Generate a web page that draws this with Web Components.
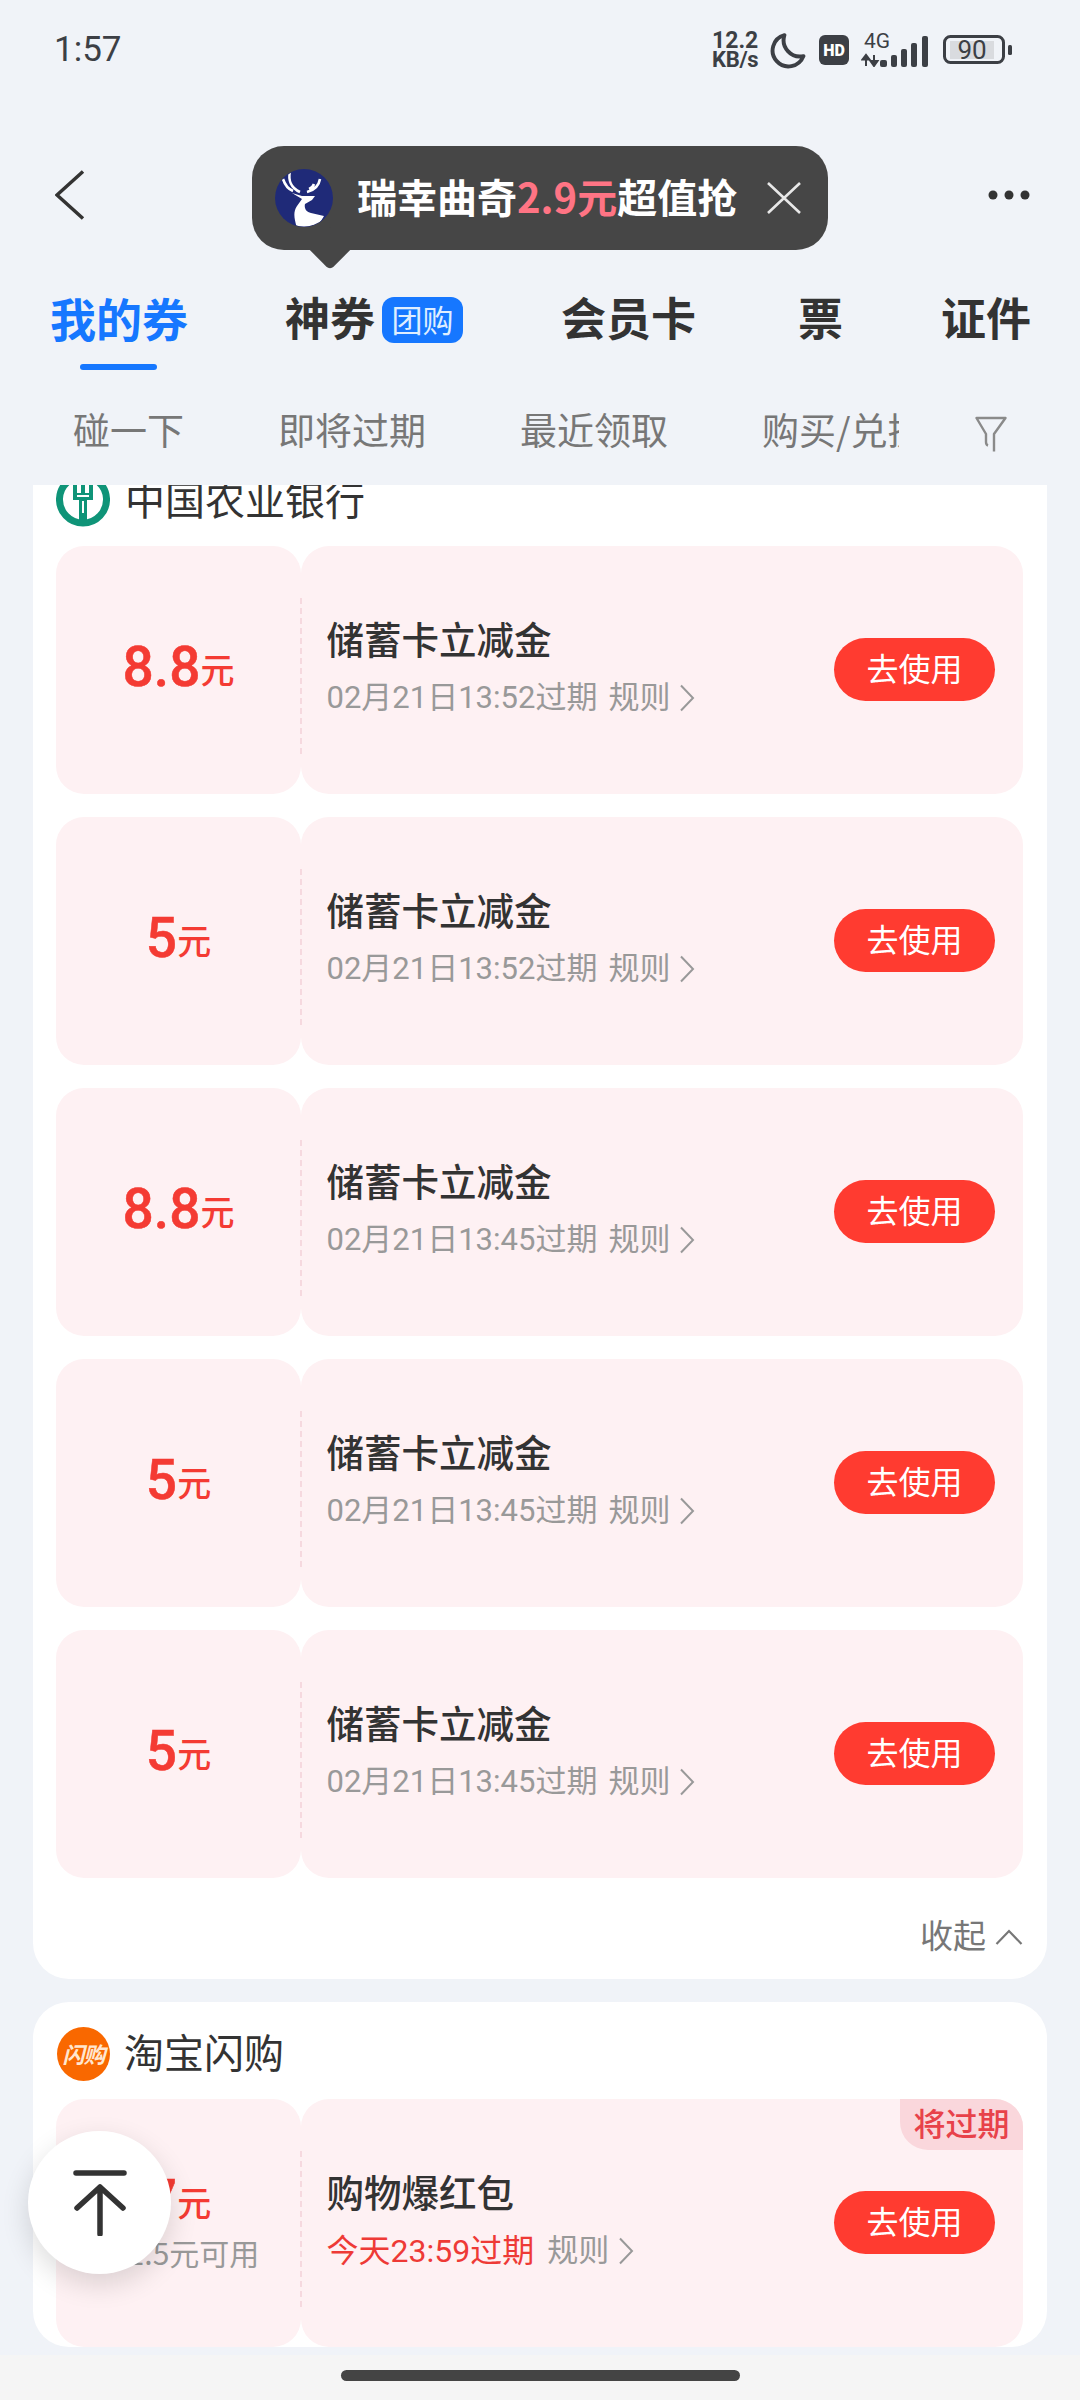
<!DOCTYPE html>
<html lang="zh">
<head>
<meta charset="utf-8">
<title>我的券</title>
<style>
  html,body{margin:0;padding:0;background:#f0f3f8;}
  body{
    width:1080px;
    height:2400px;
    overflow:hidden;
    position:relative;
    font-family:"Noto Sans CJK SC","Noto Sans",sans-serif;
    color:#333;
  }
</style>
</head>
<body>
<status-bar></status-bar>
<nav-bar></nav-bar>
<tab-strip></tab-strip>
<filter-strip></filter-strip>
<coupon-list>
  <coupon-group name="中国农业银行" logo="abc" foot>
    <coupon-card amount="8.8" title="储蓄卡立减金" expire="02月21日13:52过期"></coupon-card>
    <coupon-card amount="5" title="储蓄卡立减金" expire="02月21日13:52过期"></coupon-card>
    <coupon-card amount="8.8" title="储蓄卡立减金" expire="02月21日13:45过期"></coupon-card>
    <coupon-card amount="5" title="储蓄卡立减金" expire="02月21日13:45过期"></coupon-card>
    <coupon-card amount="5" title="储蓄卡立减金" expire="02月21日13:45过期"></coupon-card>
  </coupon-group>
  <coupon-group name="淘宝闪购" logo="flash">
    <coupon-card amount="7" limit="满1.5元可用" title="购物爆红包" expire="今天23:59过期" urgent></coupon-card>
  </coupon-group>
</coupon-list>
<home-bar></home-bar>
<to-top></to-top>

<script>
const sans='"Noto Sans CJK SC","Noto Sans",sans-serif';

class StatusBar extends HTMLElement{
  constructor(){
    super();
    this.attachShadow({mode:'open'}).innerHTML=`
      <style>
        :host{display:flex;height:100px;align-items:center;padding:0 67px 0 54px;box-sizing:border-box;color:#3c3f45;font-family:Roboto,sans-serif;}
        .time{font-size:35px;flex:1;margin-top:-1px;}
        .speed{width:49px;font-weight:700;line-height:19px;margin-right:8px;margin-top:-1px;}
        .speed span{display:block;}
        .speed .v{font-size:23px;}
        .speed .u{font-size:22px;letter-spacing:-.3px;}
        svg{display:block;flex:none;}
        .net{width:68px;height:34px;position:relative;margin:0 14px 0 12px;}
        .net b{position:absolute;left:3px;top:-3px;font-size:21px;font-weight:400;line-height:22px;}
        .batt{position:relative;width:70px;height:30px;}
        .batt b{position:absolute;left:7px;top:5px;width:44px;height:19px;font-size:26px;font-weight:400;line-height:20px;text-align:center;}
      </style>
      <div class="time">1:57</div>
      <div class="speed"><span class="v">12.2</span><span class="u">KB/s</span></div>
      <svg width="37" height="37" viewBox="0 0 36 36"><path d="M15 3A15.500 15.500 0 1 0 33.500 23.500 A16 16 0 0 1 15 3Z" fill="none" stroke="#3c3f45" stroke-width="3.800" stroke-linejoin="round"/></svg>
      <svg width="30" height="30" viewBox="0 0 30 30" style="margin-left:13px"><rect width="30" height="30" rx="6" fill="#3c3f45"/><text x="15" y="21" font-family="Roboto,sans-serif" font-size="16" font-weight="900" text-anchor="middle" fill="#fff">HD</text></svg>
      <div class="net">
        <b>4G</b>
        <svg width="68" height="34" viewBox="0 0 68 34" style="position:absolute;left:0;top:0">
          <path d="M5 22v11M1.500 26.500H8.500L5 22ZM13 33V22M9.500 28h7L13 33Z" fill="#3c3f45" stroke="#3c3f45" stroke-width="2"/>
          <rect x="19" y="27" width="7" height="7" rx="2" fill="#3c3f45"/>
          <rect x="30" y="22" width="6" height="12" rx="2" fill="#3c3f45"/>
          <rect x="40" y="16" width="6" height="18" rx="2" fill="#3c3f45"/>
          <rect x="50" y="10" width="6" height="24" rx="2" fill="#3c3f45"/>
          <rect x="61" y="3" width="6" height="31" rx="2" fill="#3c3f45"/>
        </svg>
      </div>
      <div class="batt">
        <svg width="70" height="30" viewBox="0 0 70 30">
          <rect x="1.500" y="1.500" width="59" height="26" rx="6" fill="none" stroke="#3c3f45" stroke-width="3"/>
          <rect x="7" y="6" width="44" height="18" fill="#d9dbdf"/>
          <rect x="65" y="10" width="4" height="10" rx="1.500" fill="#3c3f45"/>
        </svg>
        <b>90</b>
      </div>
    `;
  }
}

class NavBar extends HTMLElement{
  constructor(){
    super();
    this.attachShadow({mode:'open'}).innerHTML=`
      <style>
        :host{display:flex;position:relative;height:190px;align-items:center;justify-content:space-between;padding:0 48px 0 55px;box-sizing:border-box;}
        svg{display:block;flex:none;}
        .tip{
          position:absolute;left:252px;top:46px;width:576px;height:104px;
          background:#464646;border-radius:32px;
          display:flex;align-items:center;box-sizing:border-box;padding-left:23px;
          font-family:${sans};font-weight:700;font-size:40px;color:#fff;white-space:nowrap;
        }
        .tip::after{
          content:'';position:absolute;left:63px;bottom:-14px;width:30px;height:30px;
          background:#464646;transform:rotate(45deg);border-radius:0 0 5px 0;
        }
        .tip .txt{margin:-5px 0 0 24px;line-height:50px;}
        .tip em{font-style:normal;color:#ff7484;}
        .tip .close{margin-left:29px;}
      </style>
      <svg width="30" height="50" viewBox="0 0 30 50"><path d="M28 1.500 2 25l26 23.500" fill="none" stroke="#333" stroke-width="3.500"/></svg>
      <svg width="44" height="10" viewBox="0 0 44 10"><circle cx="5" cy="5" r="4.500" fill="#333"/><circle cx="21" cy="5" r="4.500" fill="#333"/><circle cx="37" cy="5" r="4.500" fill="#333"/></svg>
      <div class="tip">
        <svg width="58" height="60" viewBox="0 0 58 60">
          <circle cx="29" cy="30" r="29" fill="#1f2a78"/>
          <clipPath id="disc"><circle cx="29" cy="30" r="28.500"/></clipPath>
          <g clip-path="url(#disc)">
            <path d="M15 3c-2 9 1 17 10 21M8 11c2 6 5 10 10 12M45 11c-1 6-5 11-13 13M39 16c-1 3-2 4-5 5" fill="none" stroke="#fff" stroke-width="2.600"/>
            <path d="M17 25 27 28H40L37 32 30 36C29 40 31 44 36 45L49 48 46 53 38 60H22C19 50 18 44 22 38L27 31Z" fill="#fff"/>
          </g>
        </svg>
        <div class="txt">瑞幸曲奇<em>2.9元</em>超值抢</div>
        <svg class="close" width="36" height="32" viewBox="0 0 36 32"><path d="M2 1l32 30M34 1 2 31" fill="none" stroke="#e8e8e8" stroke-width="2.600"/></svg>
      </div>
    `;
  }
}

class TabStrip extends HTMLElement{
  constructor(){
    super();
    this.attachShadow({mode:'open'}).innerHTML=`
      <style>
        :host{display:flex;height:90px;gap:98px;padding-left:50px;box-sizing:border-box;font-weight:700;font-size:45px;color:#333;white-space:nowrap;line-height:54px;}
        .on{position:relative;font-size:46px;margin-right:-1px;color:#1677ff;}
        .on::after{content:'';position:absolute;left:30px;top:74px;width:77px;height:6px;border-radius:3px;background:#1677ff;}
        .tab{display:flex;align-items:flex-start;}
        .tag{
          margin:7px 0 0 7px;width:81px;height:46px;border-radius:12px;background:#1677ff;
          color:#dfeeff;font-size:31px;font-weight:400;line-height:44px;text-align:center;
        }
        .single{margin-left:4px;}
      </style>
      <div class="on">我的券</div>
      <div class="tab">神券<span class="tag">团购</span></div>
      <div>会员卡</div>
      <div class="single">票</div>
      <div>证件</div>
    `;
  }
}

class FilterStrip extends HTMLElement{
  constructor(){
    super();
    this.attachShadow({mode:'open'}).innerHTML=`
      <style>
        :host{display:flex;height:105px;align-items:center;box-sizing:border-box;padding:0 73px 0 73px;color:#777;font-size:37px;white-space:nowrap;}
        .scroll{width:827px;overflow:hidden;display:flex;gap:94px;line-height:48px;margin-top:-7px;}
        svg{display:block;margin-left:76px;flex:none;margin-top:3px;}
      </style>
      <div class="scroll"><span>碰一下</span><span>即将过期</span><span>最近领取</span><span>购买/兑换</span></div>
      <svg width="32" height="36" viewBox="0 0 32 36"><path d="M13 29.500c-1.500-.5-2-1.500-2-3.500V18L1.500 2h29L19 18V35.500" fill="none" stroke="#8a8a8a" stroke-width="2.400" stroke-linejoin="round"/></svg>
    `;
  }
}

class CouponList extends HTMLElement{
  constructor(){
    super();
    this.attachShadow({mode:'open'}).innerHTML=`
      <style>
        :host{display:block;height:1870px;overflow:hidden;padding:0 33px;box-sizing:border-box;}
        .inner{display:flex;flex-direction:column;gap:23px;margin-top:-36px;}
      </style>
      <div class="inner"><slot></slot></div>
    `;
  }
}

const groupLogos={
  abc:`<svg width="54" height="54" viewBox="0 0 54 54">
    <path d="M12 7.500A23.500 23.500 0 1 0 42 7.500" fill="none" stroke="#0f9478" stroke-width="7"/>
    <path d="M17 0h20v26h-6v24h-8V26h-6Z" fill="#0f9478"/>
    <path d="M21 11h4v8h-4ZM29 11h4v8h-4ZM21 21h12v2H21ZM26 27h2v12h-2Z" fill="#fff"/>
  </svg>`,
  flash:`<div class="flash">闪购</div>`
};

class CouponGroup extends HTMLElement{
  constructor(){
    super();
    this.attachShadow({mode:'open'});
  }
  connectedCallback(){
    const foot=this.hasAttribute('foot')?`
      <div class="foot"><span>收起</span><svg width="28" height="16" viewBox="0 0 28 16"><path d="M1.500 15 14 2l12.500 13" fill="none" stroke="#777" stroke-width="2.200"/></svg></div>`:'';
    this.shadowRoot.innerHTML=`
      <style>
        :host{display:block;background:#fff;border-radius:36px;padding:25px 24px 0 23px;}
        .head{display:flex;align-items:center;height:54px;font-size:40px;color:#333;gap:15px;margin-bottom:18px;line-height:54px;}
        .head span{margin-top:-7px;}
        svg{display:block;flex:none;}
        .flash{
          width:53px;height:54px;margin-left:1px;margin-right:-1px;border-radius:50%;background:#f96800;color:#ffe6cf;flex:none;
          font-size:22px;font-weight:700;font-style:italic;text-align:center;line-height:52px;letter-spacing:-1px;
        }
        .rows{display:flex;flex-direction:column;gap:23px;}
        .foot{display:flex;justify-content:flex-end;align-items:center;gap:9px;height:40px;margin-top:39px;padding-bottom:22px;font-size:33px;color:#777;line-height:40px;}
        .foot span{margin-top:-6px;}
      </style>
      <div class="head">${groupLogos[this.getAttribute('logo')]}<span>${this.getAttribute('name')}</span></div>
      <div class="rows"><slot></slot></div>
      ${foot}
    `;
  }
}

class CouponCard extends HTMLElement{
  constructor(){
    super();
    this.attachShadow({mode:'open'});
  }
  connectedCallback(){
    const urgent=this.hasAttribute('urgent');
    const limit=this.getAttribute('limit');
    this.shadowRoot.innerHTML=`
      <style>
        :host{display:flex;height:248px;position:relative;}
        .left,.right{background:#fef1f3;border-radius:28px;}
        .left{width:245px;flex:none;display:flex;flex-direction:column;align-items:center;justify-content:center;}
        .right{flex:1;display:flex;align-items:center;justify-content:space-between;padding:0 28px 0 25.500px;position:relative;}
        .dash{position:absolute;left:244px;top:52px;height:156px;width:0;border-left:2px dashed #f6d9df;}
        .amt{color:#f43b33;font-family:Roboto,sans-serif;font-weight:500;font-size:55px;line-height:62px;white-space:nowrap;margin-top:-5px;-webkit-text-stroke:.5px #f43b33;}
        .amt i{font-style:normal;font-family:${sans};font-size:34px;font-weight:500;vertical-align:3px;-webkit-text-stroke:0;}
        .limit{color:#999;font-size:30px;line-height:40px;margin-top:-1px;}
        .title{font-size:37.500px;font-weight:500;color:#333;line-height:50px;}
        .meta{font-size:31px;color:#999;line-height:44px;margin-top:13px;display:flex;align-items:center;white-space:nowrap;font-family:Roboto,${sans};}
        .meta .when{color:${urgent?'#ee3a36':'#999'};margin-right:${urgent?13:11}px;${urgent?'font-size:32px;':''}}
        .meta svg{margin-left:9px;display:block;}
        .info{margin-top:-7px;}
        .use{width:161px;height:63px;margin-top:-2px;border-radius:32px;background:#ff3b30;color:#fff;font-size:32px;line-height:58px;text-align:center;flex:none;}
        .flag{position:absolute;right:0;top:0;width:123px;height:51px;background:#fad7dc;color:#e8424a;font-size:32px;font-weight:500;line-height:47px;text-align:center;border-radius:0 28px 0 28px;}
      </style>
      <div class="left">
        <div class="amt">${this.getAttribute('amount')}<i>元</i></div>
        ${limit?`<div class="limit">${limit}</div>`:''}
      </div>
      <div class="right">
        <div class="info">
          <div class="title">${this.getAttribute('title')}</div>
          <div class="meta"><span class="when">${this.getAttribute('expire')}</span><span>规则</span>
            <svg width="16" height="28" viewBox="0 0 16 28"><path d="M2 1.500 14 14 2 26.500" fill="none" stroke="#999" stroke-width="2"/></svg>
          </div>
        </div>
        <div class="use">去使用</div>
        ${urgent?'<div class="flag">将过期</div>':''}
      </div>
      <div class="dash"></div>
    `;
  }
}

class ToTop extends HTMLElement{
  constructor(){
    super();
    this.attachShadow({mode:'open'}).innerHTML=`
      <style>
        :host{position:absolute;left:28px;top:2131px;width:143px;height:143px;border-radius:50%;background:#fff;box-shadow:0 10px 28px rgba(0,0,0,.14);display:flex;align-items:center;justify-content:center;}
        svg{display:block;}
      </style>
      <svg width="54" height="66" viewBox="0 0 54 66"><path d="M3 3h48M27 64V17M4 38 27 17l23 21" fill="none" stroke="#333" stroke-width="5.500" stroke-linecap="round" stroke-linejoin="round"/></svg>
    `;
  }
}

class HomeBar extends HTMLElement{
  constructor(){
    super();
    this.attachShadow({mode:'open'}).innerHTML=`
      <style>
        :host{display:flex;height:45px;background:#f5f5f5;justify-content:center;padding-top:15px;box-sizing:border-box;}
        div{width:399px;height:11px;border-radius:6px;background:#444;}
      </style>
      <div></div>
    `;
  }
}

customElements.define('status-bar',StatusBar);
customElements.define('nav-bar',NavBar);
customElements.define('tab-strip',TabStrip);
customElements.define('filter-strip',FilterStrip);
customElements.define('coupon-list',CouponList);
customElements.define('coupon-group',CouponGroup);
customElements.define('coupon-card',CouponCard);
customElements.define('to-top',ToTop);
customElements.define('home-bar',HomeBar);
</script>
</body>
</html>
